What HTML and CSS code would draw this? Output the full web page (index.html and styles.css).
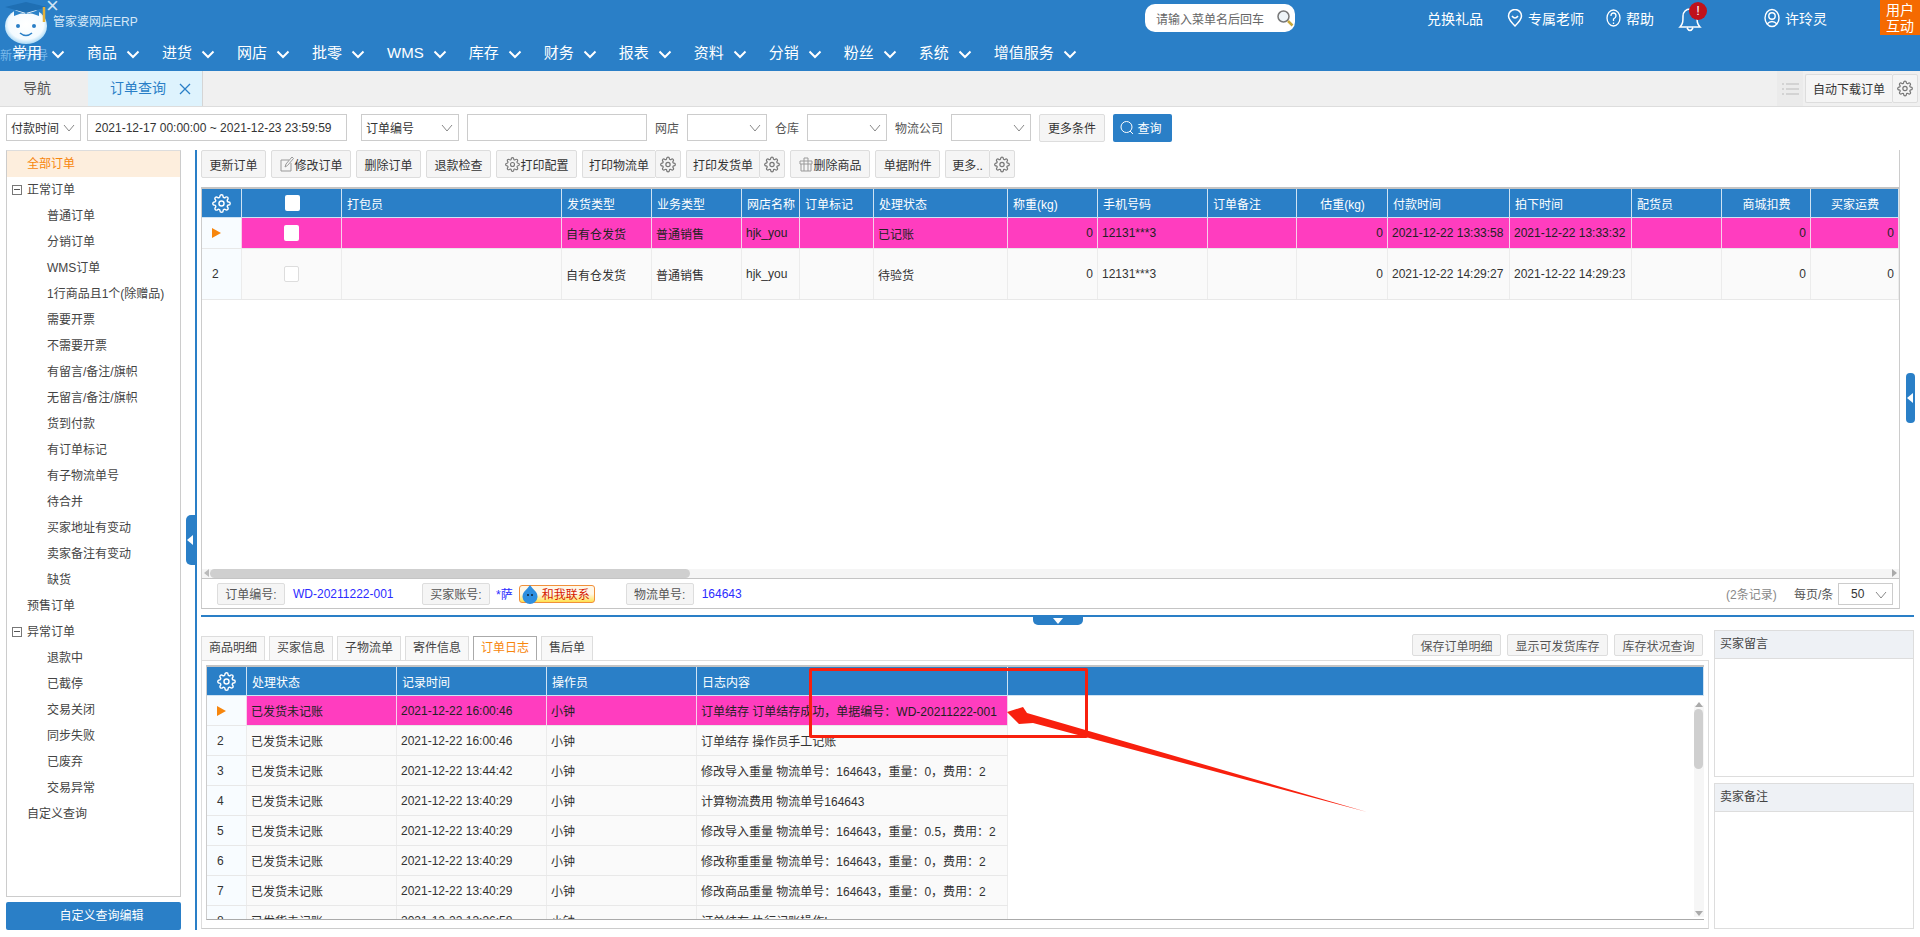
FILE: index.html
```html
<!DOCTYPE html>
<html lang="en">
<head>
    <meta charset="UTF-8">
    <title>订单查询</title>
    <link rel="stylesheet" href="styles.css">
</head>
<body>
    <svg class="defs" width="0" height="0">
        <symbol id="gear" viewBox="0 0 24 24">
            <circle cx="12" cy="12" r="3.2" fill="none" stroke="currentColor" stroke-width="1.8"/>
            <path fill="none" stroke="currentColor" stroke-width="1.8" d="M19.4 15a1.65 1.65 0 0 0 .33 1.82l.06.06a2 2 0 0 1 0 2.83 2 2 0 0 1-2.83 0l-.06-.06a1.65 1.65 0 0 0-1.82-.33 1.65 1.65 0 0 0-1 1.51V21a2 2 0 0 1-2 2 2 2 0 0 1-2-2v-.09A1.65 1.65 0 0 0 9 19.4a1.65 1.65 0 0 0-1.82.33l-.06.06a2 2 0 0 1-2.83 0 2 2 0 0 1 0-2.83l.06-.06a1.65 1.65 0 0 0 .33-1.82 1.65 1.65 0 0 0-1.51-1H3a2 2 0 0 1-2-2 2 2 0 0 1 2-2h.09A1.65 1.65 0 0 0 4.6 9a1.65 1.65 0 0 0-.33-1.82l-.06-.06a2 2 0 0 1 0-2.83 2 2 0 0 1 2.83 0l.06.06a1.65 1.65 0 0 0 1.82.33H9a1.65 1.65 0 0 0 1-1.51V3a2 2 0 0 1 2-2 2 2 0 0 1 2 2v.09a1.65 1.65 0 0 0 1 1.51 1.65 1.65 0 0 0 1.82-.33l.06-.06a2 2 0 0 1 2.83 0 2 2 0 0 1 0 2.83l-.06.06a1.65 1.65 0 0 0-.33 1.82V9a1.65 1.65 0 0 0 1.51 1H21a2 2 0 0 1 2 2 2 2 0 0 1-2 2h-.09a1.65 1.65 0 0 0-1.51 1z"/>
        </symbol>
        <symbol id="chev" viewBox="0 0 14 9">
            <path d="M1.5 1.5 7 7l5.5-5.5" fill="none" stroke="currentColor" stroke-width="2"/>
        </symbol>
        <symbol id="thin-chev" viewBox="0 0 12 8">
            <path d="M1 1l5 6 5-6" fill="none" stroke="currentColor" stroke-width="1"/>
        </symbol>
    </svg>

    <header class="topbar">
        <div class="top-row">
            <div class="logo">
                <svg class="mascot" width="46" height="44" viewBox="0 0 46 44">
                    <defs>
                        <radialGradient id="face" cx="50%" cy="45%" r="60%">
                            <stop offset="0" stop-color="#fff"/>
                            <stop offset="0.7" stop-color="#f4fbff"/>
                            <stop offset="1" stop-color="#8ccaf0"/>
                        </radialGradient>
                    </defs>
                    <ellipse cx="24" cy="25" rx="21" ry="18" fill="url(#face)"/>
                    <path d="M3 6 24 1l21 5-21 6z" fill="#1f6fb3"/>
                    <path d="M12 9v6q12-6 25 0V9l-13 4z" fill="#2c83c9"/>
                    <path d="M42 6v15" stroke="#e3b13a" stroke-width="2.5"/>
                    <circle cx="16" cy="25" r="2" fill="#2a7fc7"/>
                    <circle cx="32" cy="25" r="2" fill="#2a7fc7"/>
                    <path d="M18 32q6 5 12 0" fill="none" stroke="#2a7fc7" stroke-width="1.6"/>
                </svg>
                <span class="logo-close">×</span>
                <span class="logo-name">管家婆网店ERP</span>
            </div>
            <div class="search-menu">
                <span>请输入菜单名后回车</span>
                <svg width="18" height="18" viewBox="0 0 18 18">
                    <circle cx="7.5" cy="7.5" r="5.5" fill="#eef4f8" stroke="#777" stroke-width="1.5"/>
                    <path d="M12 12l4.5 4.5" stroke="#c9a83a" stroke-width="2.5"/>
                </svg>
            </div>
            <div class="top-links">
                <span class="gift">兑换礼品</span>
                <span class="top-link teacher">
                    <svg width="16" height="18" viewBox="0 0 16 18"><path d="M8 17C3 12 1.500 9.500 1.500 7a6.500 6.500 0 0 1 13 0c0 2.500-1.500 5-6.500 10z" fill="none" stroke="#fff" stroke-width="1.500"/><path d="M5 7q3 4 6 0" fill="none" stroke="#fff" stroke-width="1.500"/></svg>
                    专属老师
                </span>
                <span class="top-link helper">
                    <svg width="15" height="18" viewBox="0 0 15 18"><ellipse cx="7.500" cy="9" rx="6.500" ry="8" fill="none" stroke="#fff" stroke-width="1.300"/><path d="M5 7q0-3 2.500-3T10 7q0 1.500-2.500 3v2M7.500 13.500v1.500" fill="none" stroke="#fff" stroke-width="1.300"/></svg>
                    帮助
                </span>
                <span class="bell">
                    <svg width="24" height="30" viewBox="0 0 24 30"><path d="M2 24c3-3 3-6 3-11 0-4 3-7 7-7s7 3 7 7c0 5 0 8 3 11zM9 25q3 5 6 0" fill="none" stroke="#fff" stroke-width="1.500"/></svg>
                    <b class="bell-badge">!</b>
                </span>
                <span class="top-link account">
                    <svg width="16" height="20" viewBox="0 0 16 20"><ellipse cx="8" cy="10" rx="7" ry="8.500" fill="none" stroke="#fff" stroke-width="1.400"/><circle cx="8" cy="8" r="3.200" fill="none" stroke="#fff" stroke-width="1.400"/><path d="M3 16q5-5 10 0" fill="none" stroke="#fff" stroke-width="1.400"/></svg>
                    许玲灵
                </span>
            </div>
            <div class="user-talk">用户<br>互动</div>
        </div>
        <span class="guide">新手引导</span>
        <nav class="menu">
            <span>常用<svg class="chev"><use href="#chev"/></svg></span>
            <span>商品<svg class="chev"><use href="#chev"/></svg></span>
            <span>进货<svg class="chev"><use href="#chev"/></svg></span>
            <span>网店<svg class="chev"><use href="#chev"/></svg></span>
            <span>批零<svg class="chev"><use href="#chev"/></svg></span>
            <span>WMS<svg class="chev"><use href="#chev"/></svg></span>
            <span>库存<svg class="chev"><use href="#chev"/></svg></span>
            <span>财务<svg class="chev"><use href="#chev"/></svg></span>
            <span>报表<svg class="chev"><use href="#chev"/></svg></span>
            <span>资料<svg class="chev"><use href="#chev"/></svg></span>
            <span>分销<svg class="chev"><use href="#chev"/></svg></span>
            <span>粉丝<svg class="chev"><use href="#chev"/></svg></span>
            <span>系统<svg class="chev"><use href="#chev"/></svg></span>
            <span>增值服务<svg class="chev"><use href="#chev"/></svg></span>
        </nav>
    </header>

    <div class="tabbar">
        <div class="tab">导航</div>
        <div class="tab tab-active">订单查询<svg class="tab-x" width="12" height="12" viewBox="0 0 12 12"><path d="M1 1l10 10M11 1 1 11" stroke="#2a7fc7" stroke-width="1.300"/></svg></div>
        <div class="tab-tools">
            <span class="tab-list">
                <svg width="17" height="12" viewBox="0 0 17 12"><path d="M0 1h2M4 1h13M0 6h2M4 6h13M0 11h2M4 11h13" stroke="#bbb" stroke-width="1.200"/></svg>
            </span>
            <span class="btn-pair auto-btn">
                <span class="btn">自动下载订单</span><span class="btn gear-btn"><svg class="gear-ico"><use href="#gear"/></svg></span>
            </span>
        </div>
    </div>

    <div class="filter">
        <span class="sel sel-time">付款时间<svg class="thin-chev"><use href="#thin-chev"/></svg></span>
        <span class="field field-date">2021-12-17 00:00:00 ~ 2021-12-23 23:59:59</span>
        <span class="sel sel-no">订单编号<svg class="thin-chev"><use href="#thin-chev"/></svg></span>
        <span class="field field-no"></span>
        <label>网店</label>
        <span class="sel sel-short"><svg class="thin-chev"><use href="#thin-chev"/></svg></span>
        <label>仓库</label>
        <span class="sel sel-short"><svg class="thin-chev"><use href="#thin-chev"/></svg></span>
        <label>物流公司</label>
        <span class="sel sel-short"><svg class="thin-chev"><use href="#thin-chev"/></svg></span>
        <span class="btn btn-more">更多条件</span>
        <span class="btn-query">
            <svg width="14" height="15" viewBox="0 0 14 15"><circle cx="6.500" cy="7" r="5.500" fill="none" stroke="#fff"/><path d="M10 11l3 3" stroke="#fff"/></svg>
            查询
        </span>
    </div>

    <div class="main">
        <aside class="side">
            <div class="tree">
                <div class="node node-on">全部订单</div>
                <div class="node"><i class="fold"></i>正常订单</div>
                <div class="leaf">普通订单</div>
                <div class="leaf">分销订单</div>
                <div class="leaf">WMS订单</div>
                <div class="leaf">1行商品且1个(除赠品)</div>
                <div class="leaf">需要开票</div>
                <div class="leaf">不需要开票</div>
                <div class="leaf">有留言/备注/旗帜</div>
                <div class="leaf">无留言/备注/旗帜</div>
                <div class="leaf">货到付款</div>
                <div class="leaf">有订单标记</div>
                <div class="leaf">有子物流单号</div>
                <div class="leaf">待合并</div>
                <div class="leaf">买家地址有变动</div>
                <div class="leaf">卖家备注有变动</div>
                <div class="leaf">缺货</div>
                <div class="node">预售订单</div>
                <div class="node"><i class="fold"></i>异常订单</div>
                <div class="leaf">退款中</div>
                <div class="leaf">已截停</div>
                <div class="leaf">交易关闭</div>
                <div class="leaf">同步失败</div>
                <div class="leaf">已废弃</div>
                <div class="leaf">交易异常</div>
                <div class="node">自定义查询</div>
            </div>
            <div class="side-btn">自定义查询编辑</div>
        </aside>

        <div class="side-split"><span class="side-handle"></span></div>

        <div class="content">
            <section class="upper">
                <div class="toolbar">
                    <span class="btn tool">更新订单</span>
                    <span class="btn tool">
                        <svg width="14" height="16" viewBox="0 0 14 16"><path d="M1 4h8M1 4v11h10V7M5 11l1-3 6-7 1.500 1.500-6 7z" fill="none" stroke="#999"/></svg>修改订单
                    </span>
                    <span class="btn tool">删除订单</span>
                    <span class="btn tool">退款检查</span>
                    <span class="btn tool"><svg class="gear-ico"><use href="#gear"/></svg>打印配置</span>
                    <span class="btn-pair"><span class="btn tool">打印物流单</span><span class="btn gear-btn"><svg class="gear-ico"><use href="#gear"/></svg></span></span>
                    <span class="btn-pair"><span class="btn tool">打印发货单</span><span class="btn gear-btn"><svg class="gear-ico"><use href="#gear"/></svg></span></span>
                    <span class="btn tool">
                        <svg width="14" height="16" viewBox="0 0 14 16"><path d="M1 5h12v3H1zM2 8v7h10V8M5 5v10M9 5v10M5 5V2h4v3" fill="none" stroke="#999"/></svg>删除商品
                    </span>
                    <span class="btn tool">单据附件</span>
                    <span class="btn-pair"><span class="btn tool">更多..</span><span class="btn gear-btn"><svg class="gear-ico"><use href="#gear"/></svg></span></span>
                </div>

                <div class="grid order-grid">
                    <div class="row head">
                        <div class="cell"><svg class="gear-head"><use href="#gear"/></svg></div>
                        <div class="cell center"><i class="check"></i></div>
                        <div class="cell">打包员</div>
                        <div class="cell">发货类型</div>
                        <div class="cell">业务类型</div>
                        <div class="cell">网店名称</div>
                        <div class="cell">订单标记</div>
                        <div class="cell">处理状态</div>
                        <div class="cell">称重(kg)</div>
                        <div class="cell">手机号码</div>
                        <div class="cell">订单备注</div>
                        <div class="cell center">估重(kg)</div>
                        <div class="cell">付款时间</div>
                        <div class="cell">拍下时间</div>
                        <div class="cell">配货员</div>
                        <div class="cell center">商城扣费</div>
                        <div class="cell center">买家运费</div>
                    </div>
                    <div class="row picked">
                        <div class="cell index"><i class="cursor"></i></div>
                        <div class="cell center"><i class="check"></i></div>
                        <div class="cell"></div>
                        <div class="cell">自有仓发货</div>
                        <div class="cell">普通销售</div>
                        <div class="cell">hjk_you</div>
                        <div class="cell"></div>
                        <div class="cell">已记账</div>
                        <div class="cell num">0</div>
                        <div class="cell">12131***3</div>
                        <div class="cell"></div>
                        <div class="cell num">0</div>
                        <div class="cell">2021-12-22 13:33:58</div>
                        <div class="cell">2021-12-22 13:33:32</div>
                        <div class="cell"></div>
                        <div class="cell num">0</div>
                        <div class="cell num">0</div>
                    </div>
                    <div class="row tall">
                        <div class="cell index">2</div>
                        <div class="cell center"><i class="check check-line"></i></div>
                        <div class="cell"></div>
                        <div class="cell">自有仓发货</div>
                        <div class="cell">普通销售</div>
                        <div class="cell">hjk_you</div>
                        <div class="cell"></div>
                        <div class="cell">待验货</div>
                        <div class="cell num">0</div>
                        <div class="cell">12131***3</div>
                        <div class="cell"></div>
                        <div class="cell num">0</div>
                        <div class="cell">2021-12-22 14:29:27</div>
                        <div class="cell">2021-12-22 14:29:23</div>
                        <div class="cell"></div>
                        <div class="cell num">0</div>
                        <div class="cell num">0</div>
                    </div>
                </div>

                <div class="hscroll">
                    <i class="hscroll-left"></i>
                    <span class="hscroll-thumb"></span>
                    <i class="hscroll-right"></i>
                </div>

                <div class="statusbar">
                    <span class="btn stat-tag">订单编号:</span>
                    <span class="stat-val val-no">WD-20211222-001</span>
                    <span class="btn stat-tag">买家账号:</span>
                    <span class="stat-val val-buyer">*萨</span>
                    <span class="qq">
                        <svg width="20" height="20" viewBox="0 0 20 20"><path d="M10 1q2 3 6 7a7.500 7.500 0 1 1-12 0q4-4 6-7z" fill="#2f8fe0"/><circle cx="8" cy="11" r="1" fill="#123"/><circle cx="12" cy="11" r="1" fill="#123"/></svg>
                        和我联系
                    </span>
                    <span class="btn stat-tag tag-waybill">物流单号:</span>
                    <span class="stat-val">164643</span>
                    <span class="stat-count">(2条记录)</span>
                    <span class="stat-page">每页/条</span>
                    <span class="sel sel-page">50<svg class="thin-chev"><use href="#thin-chev"/></svg></span>
                </div>
            </section>

            <div class="h-split"><span class="h-handle"></span></div>

            <section class="lower">
                <div class="detail">
                    <div class="detail-tabs">
                        <span class="dtab">商品明细</span>
                        <span class="dtab">买家信息</span>
                        <span class="dtab">子物流单</span>
                        <span class="dtab">寄件信息</span>
                        <span class="dtab dtab-on">订单日志</span>
                        <span class="dtab">售后单</span>
                        <div class="detail-actions">
                            <span class="btn">保存订单明细</span>
                            <span class="btn">显示可发货库存</span>
                            <span class="btn">库存状况查询</span>
                        </div>
                    </div>
                    <div class="detail-box">
                        <div class="grid log-grid">
                            <div class="row head">
                                <div class="cell"><svg class="gear-head"><use href="#gear"/></svg></div>
                                <div class="cell">处理状态</div>
                                <div class="cell">记录时间</div>
                                <div class="cell">操作员</div>
                                <div class="cell">日志内容</div>
                                <div class="cell"></div>
                            </div>
                            <div class="row picked">
                                <div class="cell index"><i class="cursor"></i></div>
                                <div class="cell">已发货未记账</div>
                                <div class="cell">2021-12-22 16:00:46</div>
                                <div class="cell">小钟</div>
                                <div class="cell">订单结存 订单结存成功，单据编号：WD-20211222-001</div>
                            </div>
                            <div class="row">
                                <div class="cell index">2</div>
                                <div class="cell">已发货未记账</div>
                                <div class="cell">2021-12-22 16:00:46</div>
                                <div class="cell">小钟</div>
                                <div class="cell">订单结存 操作员手工记账</div>
                            </div>
                            <div class="row">
                                <div class="cell index">3</div>
                                <div class="cell">已发货未记账</div>
                                <div class="cell">2021-12-22 13:44:42</div>
                                <div class="cell">小钟</div>
                                <div class="cell">修改导入重量 物流单号：164643，重量：0，费用：2</div>
                            </div>
                            <div class="row">
                                <div class="cell index">4</div>
                                <div class="cell">已发货未记账</div>
                                <div class="cell">2021-12-22 13:40:29</div>
                                <div class="cell">小钟</div>
                                <div class="cell">计算物流费用 物流单号164643</div>
                            </div>
                            <div class="row">
                                <div class="cell index">5</div>
                                <div class="cell">已发货未记账</div>
                                <div class="cell">2021-12-22 13:40:29</div>
                                <div class="cell">小钟</div>
                                <div class="cell">修改导入重量 物流单号：164643，重量：0.5，费用：2</div>
                            </div>
                            <div class="row">
                                <div class="cell index">6</div>
                                <div class="cell">已发货未记账</div>
                                <div class="cell">2021-12-22 13:40:29</div>
                                <div class="cell">小钟</div>
                                <div class="cell">修改称重重量 物流单号：164643，重量：0，费用：2</div>
                            </div>
                            <div class="row">
                                <div class="cell index">7</div>
                                <div class="cell">已发货未记账</div>
                                <div class="cell">2021-12-22 13:40:29</div>
                                <div class="cell">小钟</div>
                                <div class="cell">修改商品重量 物流单号：164643，重量：0，费用：2</div>
                            </div>
                            <div class="row">
                                <div class="cell index">8</div>
                                <div class="cell">已发货未记账</div>
                                <div class="cell">2021-12-22 13:36:58</div>
                                <div class="cell">小钟</div>
                                <div class="cell">订单结存 执行记账操作!</div>
                            </div>
                            <div class="vscroll">
                                <i class="vscroll-up"></i>
                                <span class="vscroll-thumb"></span>
                                <i class="vscroll-down"></i>
                            </div>
                        </div>
                    </div>
                </div>
                <div class="notes">
                    <div class="note note-buyer">
                        <div class="note-title">买家留言</div>
                        <div class="note-body"></div>
                    </div>
                    <div class="note note-seller">
                        <div class="note-title">卖家备注</div>
                        <div class="note-body"></div>
                    </div>
                </div>
            </section>
        </div>
    </div>

    <span class="right-handle"></span>

    <!-- red marks someone drew over the screenshot -->
    <div class="mark-box"></div>
    <svg class="mark-arrow" width="380" height="120" viewBox="0 0 380 120">
        <path d="M1 12 17 7 21 13 361 112 27 23 13 24z" fill="#f8200e"/>
    </svg>
</body>
</html>
```

FILE: styles.css
```css
* {
    margin: 0;
    padding: 0;
    box-sizing: border-box;
}

html, body {
    height: 937px;
    overflow: hidden;
}

body {
    font-family: "Liberation Sans", "Noto Sans CJK SC", sans-serif;
    font-size: 12px;
    color: #444;
    background: white;
    position: relative;
}

i {
    display: inline-block;
    font-style: normal;
}

.defs {
    position: absolute;
}

/* top bar */
.topbar {
    height: 71px;
    background: #2a7fc7;
    color: white;
    position: relative;
}

.top-row {
    height: 35px;
    display: flex;
}

.logo {
    width: 1145px;
    position: relative;
}

.mascot {
    position: absolute;
    left: 2px;
    top: 1px;
}

.logo-close {
    position: absolute;
    left: 46px;
    top: -7px;
    font-size: 22px;
    font-weight: 300;
    color: #cfe4f5;
}

.logo-name {
    position: absolute;
    left: 53px;
    top: 12px;
    font-size: 12px;
    color: #d5e8f7;
}

.search-menu {
    width: 150px;
    height: 28px;
    margin-top: 4px;
    padding: 0 1px 0 11px;
    background: white;
    border-radius: 10px;
    color: #666;
    display: flex;
    align-items: center;
    justify-content: space-between;
}

.top-links {
    width: 585px;
    padding-left: 132px;
    display: flex;
    align-items: center;
    height: 35px;
    font-size: 14px;
    position: relative;
}

.gift {
    width: 80px;
}

.top-link {
    display: flex;
    align-items: center;
    gap: 5px;
}

.teacher {
    width: 99px;
}

.helper {
    width: 72px;
}

.bell {
    width: 86px;
    height: 30px;
    position: relative;
}

.bell-badge {
    position: absolute;
    left: 11px;
    top: -1px;
    width: 18px;
    height: 18px;
    line-height: 18px;
    border-radius: 50%;
    background: #c0121b;
    text-align: center;
    font-size: 13px;
    font-weight: normal;
}

.user-talk {
    width: 40px;
    height: 35px;
    background: #f56a00;
    text-align: center;
    font-size: 14px;
    line-height: 16px;
    padding-top: 2px;
}

.guide {
    position: absolute;
    left: 0;
    top: 46px;
    font-size: 12px;
    color: #7ab9ea;
}

.menu {
    display: flex;
    gap: 22px;
    padding: 0 0 0 12px;
    height: 36px;
    align-items: flex-start;
    font-size: 15px;
    line-height: 36px;
    position: relative;
}

.menu span {
    display: flex;
    align-items: center;
    height: 36px;
}

.chev {
    width: 14px;
    height: 9px;
    margin-left: 9px;
    margin-top: 2px;
}

/* tabs */
.tabbar {
    height: 36px;
    background: #f0f0f0;
    border-bottom: 1px solid #ddd;
    display: flex;
}

.tab {
    width: 88px;
    height: 35px;
    line-height: 35px;
    padding-left: 23px;
    font-size: 14px;
    color: #555;
    background: #eee;
}

.tab-active {
    width: 115px;
    padding-left: 22px;
    background: #def3fd;
    color: #2a7fc7;
    border-right: 1px solid #d5d5d5;
    display: flex;
    align-items: center;
}

.tab-x {
    margin-left: 13px;
}

.tab-tools {
    margin-left: auto;
    display: flex;
    align-items: center;
    padding-right: 2px;
}

.tab-list {
    width: 26px;
    height: 35px;
    background: #ebebeb;
    display: flex;
    align-items: center;
    justify-content: center;
    margin-right: 2px;
}

.auto-btn .btn {
    height: 29px;
}

.auto-btn .btn:first-child {
    width: 87px;
    color: #333;
}

/* buttons */
.btn {
    display: inline-flex;
    align-items: center;
    justify-content: center;
    height: 28px;
    padding: 0 7.5px;
    background: #f5f5f5;
    border: 1px solid #ddd;
    border-radius: 2px;
    color: #333;
    white-space: nowrap;
}

.btn-pair {
    display: inline-flex;
}

.btn-pair .btn:first-child {
    border-right: none;
    border-radius: 2px 0 0 2px;
}

.btn-pair .tool {
    padding: 0 6px;
}

.gear-btn {
    width: 26px;
    padding: 0;
}

.gear-ico {
    width: 16px;
    height: 17px;
    color: #777;
    flex: none;
}

/* query filter */
.filter {
    height: 43px;
    display: flex;
    align-items: center;
    padding: 0 0 2px 6px;
    color: #555;
}

.sel, .field {
    height: 27px;
    background: white;
    border: 1px solid #ccc;
    display: flex;
    align-items: center;
    color: #333;
    position: relative;
    flex: none;
}

.sel {
    padding-left: 4px;
}

.thin-chev {
    width: 12px;
    height: 8px;
    color: #888;
    position: absolute;
    right: 5px;
    top: 9px;
}

.sel-time {
    width: 75px;
}

.field-date {
    width: 260px;
    margin-left: 6px;
    padding-left: 7px;
}

.sel-no {
    width: 98px;
    margin-left: 14px;
}

.field-no {
    width: 180px;
    margin-left: 8px;
}

.filter label {
    width: 32px;
    margin-left: 8px;
}

.sel-short {
    width: 80px;
}

.filter label:nth-of-type(3) {
    width: 56px;
}

.btn-more {
    width: 66px;
    margin-left: 8px;
}

.btn-query {
    width: 59px;
    height: 28px;
    margin-left: 8px;
    background: #2a7fc7;
    color: white;
    border-radius: 2px;
    display: flex;
    align-items: center;
    justify-content: center;
    gap: 3px;
    padding-right: 3px;
}

/* body area */
.main {
    display: flex;
    height: 780px;
    padding-left: 6px;
}

.side {
    width: 175px;
    flex: none;
}

.tree {
    height: 747px;
    border: 1px solid #ccc;
    border-top-color: #ddd;
}

.node, .leaf {
    height: 26px;
    line-height: 26px;
    color: #444;
    white-space: nowrap;
}

.node {
    padding-left: 20px;
    position: relative;
}

.node-on {
    background: #fdeedd;
    color: #f7860d;
}

.leaf {
    padding-left: 40px;
}

.fold {
    position: absolute;
    left: 5px;
    top: 8px;
    width: 10px;
    height: 10px;
    border: 1px solid #777;
}

.fold::after {
    content: "";
    position: absolute;
    left: 1px;
    top: 3px;
    width: 6px;
    height: 1px;
    background: #555;
}

.side-btn {
    height: 28px;
    margin-top: 5px;
    padding-left: 16px;
    background: #2a7fc7;
    color: white;
    line-height: 28px;
    text-align: center;
    border-radius: 2px;
}

.side-split {
    width: 16px;
    flex: none;
    border-right: 2px solid #2a7fc7;
    position: relative;
}

.side-handle {
    position: absolute;
    left: 5px;
    top: 365px;
    width: 9px;
    height: 50px;
    background: #2a7fc7;
    border-radius: 5px 0 0 5px;
}

.side-handle::after {
    content: "";
    position: absolute;
    left: 1px;
    top: 20px;
    border: 5px solid transparent;
    border-right: 6px solid white;
    border-left: none;
}

.content {
    margin-left: 4px;
    width: 1713px;
    flex: none;
}

/* upper orders panel */
.upper {
    width: 1699px;
    height: 459px;
    border-right: 1px solid #ccc;
    display: flex;
    flex-direction: column;
}

.toolbar {
    height: 37px;
    display: flex;
    gap: 5px;
    flex: none;
}

.tool {
    gap: 1px;
}

.tool .gear-ico {
    width: 15px;
}

.grid {
    background: white;
    position: relative;
    overflow: hidden;
}

.order-grid {
    height: 382px;
    flex: none;
    border-top: 2px solid #c4c4c4;
    border-left: 1px solid #ccc;
}

.row {
    display: grid;
    background: #fafafa;
    border-bottom: 1px solid #e8e8e8;
}

.order-grid .row {
    grid-template-columns: 40px 100px 220px 90px 90px 58px 74px 134px 90px 110px 89px 91px 122px 122px 90px 89px 88px;
    height: 31px;
}

.order-grid .tall {
    height: 51px;
}

.cell {
    padding: 0 4px;
    display: flex;
    align-items: center;
    border-right: 1px solid #ececec;
    white-space: nowrap;
    overflow: hidden;
    color: #333;
}

.row .index {
    background: #f8fcff;
    padding-left: 10px;
}

.head {
    background: #2a7fc7;
    border-bottom: 1px solid #cfe3f3;
}

.order-grid .head {
    height: 29px;
}

.head .cell {
    color: white;
    border-right: 1px solid #cfe3f3;
    padding-left: 5px;
}

.picked {
    background: #ff3dbf;
    border-bottom: 1px solid #e8e8e8;
}

.picked .cell {
    color: #222;
    border-right: 1px solid #f7d0ea;
}

.center {
    justify-content: center;
}

.num {
    justify-content: flex-end;
}

.gear-head {
    width: 19px;
    height: 21px;
    color: white;
    margin-left: 5px;
}

.check {
    width: 15px;
    height: 16px;
    background: white;
    border-radius: 2px;
}

.check-line {
    border: 1px solid #ddd;
}

.cursor {
    border: 5px solid transparent;
    border-left: 9px solid #f7860d;
    border-right: none;
}

.hscroll {
    height: 10px;
    background: #f5f5f5;
    border-bottom: 1px solid #c4c4c4;
    border-left: 1px solid #ccc;
    position: relative;
    flex: none;
}

.hscroll-thumb {
    position: absolute;
    left: 8px;
    top: 0;
    width: 480px;
    height: 9px;
    background: #cfcfcf;
    border-radius: 5px;
}

.hscroll-left, .hscroll-right {
    position: absolute;
    top: 0;
    border: 4px solid transparent;
}

.hscroll-left {
    left: 2px;
    border-right: 5px solid #bbb;
    border-left: none;
}

.hscroll-right {
    right: 2px;
    border-left: 5px solid #aaa;
    border-right: none;
}

.statusbar {
    height: 30px;
    flex: none;
    display: flex;
    align-items: center;
    padding-left: 15px;
    border-left: 1px solid #ccc;
    border-bottom: 1px solid #c4c4c4;
}

.stat-tag {
    width: 68px;
    height: 22px;
    padding: 0;
    color: #555;
}

.stat-val {
    margin-left: 8px;
    color: #2c2cff;
}

.val-no {
    width: 129px;
    flex: none;
}

.val-buyer {
    margin-left: 6px;
}

.qq {
    width: 76px;
    height: 18px;
    margin-left: 6px;
    border: 1px solid #f1903a;
    border-radius: 3px;
    background: linear-gradient(#fff7e8 50%, #ffe24f);
    color: #d61a00;
    display: flex;
    align-items: center;
    gap: 2px;
}

.tag-waybill {
    margin-left: 31px;
}

.stat-count {
    margin-left: auto;
    width: 68px;
    color: #888;
}

.stat-page {
    width: 44px;
    color: #555;
}

.sel-page {
    width: 55px;
    height: 22px;
    margin-right: 6px;
    padding-left: 12px;
}

.sel-page .thin-chev {
    top: 7px;
}

/* split between the panels */
.h-split {
    height: 2px;
    margin-top: 6px;
    background: #2a7fc7;
    position: relative;
}

.h-handle {
    position: absolute;
    left: 832px;
    top: 2px;
    width: 50px;
    height: 8px;
    background: #2a7fc7;
    border-radius: 0 0 5px 5px;
}

.h-handle::after {
    content: "";
    position: absolute;
    left: 20px;
    top: 1px;
    border: 5px solid transparent;
    border-top: 6px solid white;
    border-bottom: none;
}

/* lower detail */
.lower {
    display: flex;
    height: 313px;
}

.detail {
    width: 1508px;
    flex: none;
    padding-top: 19px;
}

.detail-tabs {
    height: 24px;
    display: flex;
    gap: 4px;
    position: relative;
}

.dtab {
    width: 64px;
    height: 24px;
    line-height: 22px;
    text-align: center;
    background: #f8f8f8;
    border: 1px solid #ddd;
    border-bottom: none;
    color: #444;
}

.dtab:last-of-type {
    width: 52px;
}

.dtab-on {
    background: white;
    border-color: #aaa;
    color: #f7860d;
}

.detail-actions {
    position: absolute;
    right: 6px;
    top: -2px;
    display: flex;
    gap: 6px;
}

.detail-actions .btn {
    height: 22px;
    color: #555;
}

.detail-box {
    height: 269px;
    border: 1px solid #ddd;
    border-bottom: 1px solid #ccc;
    padding: 4px 4px 0;
}

.log-grid {
    height: 255px;
    border-top: 2px solid #c4c4c4;
    border-bottom: 1px solid #aaa;
    border-left: 1px solid #ccc;
}

.log-grid .row {
    grid-template-columns: 40px 150px 150px 150px 311px;
    height: 30px;
    width: 801px;
}

.log-grid .head {
    grid-template-columns: 40px 150px 150px 150px 311px 1fr;
    width: auto;
    height: 29px;
}

.vscroll {
    position: absolute;
    right: 0;
    top: 38px;
    width: 10px;
    height: 212px;
    background: #f6f6f6;
}

.vscroll-thumb {
    position: absolute;
    left: 0;
    top: 4px;
    width: 9px;
    height: 60px;
    background: #cfcfcf;
    border-radius: 5px;
}

.vscroll-up, .vscroll-down {
    position: absolute;
    left: 1px;
    border: 4px solid transparent;
}

.vscroll-up {
    top: -3px;
    border-bottom: 5px solid #aaa;
    border-top: none;
}

.vscroll-down {
    bottom: 1px;
    border-top: 5px solid #aaa;
    border-bottom: none;
}

.notes {
    width: 200px;
    margin-left: 5px;
    padding-top: 13px;
    display: flex;
    flex-direction: column;
    gap: 6px;
    flex: none;
}

.note {
    border: 1px solid #ddd;
    display: flex;
    flex-direction: column;
}

.note-buyer {
    height: 147px;
}

.note-seller {
    height: 146px;
}

.note-title {
    height: 28px;
    line-height: 27px;
    padding-left: 5px;
    background: #eef1f5;
    border-bottom: 1px solid #ddd;
    color: #444;
    flex: none;
}

.note-body {
    flex: 1;
}

/* things that lie over the page */
.right-handle {
    position: absolute;
    left: 1906px;
    top: 373px;
    width: 9px;
    height: 50px;
    background: #2a7fc7;
    border-radius: 4px;
}

.right-handle::after {
    content: "";
    position: absolute;
    left: 1px;
    top: 20px;
    border: 5px solid transparent;
    border-right: 6px solid white;
    border-left: none;
}

.mark-box {
    position: absolute;
    left: 809px;
    top: 668px;
    width: 279px;
    height: 70px;
    border: 3px solid #f8200e;
    border-radius: 2px;
}

.mark-arrow {
    position: absolute;
    left: 1006px;
    top: 700px;
}
```
